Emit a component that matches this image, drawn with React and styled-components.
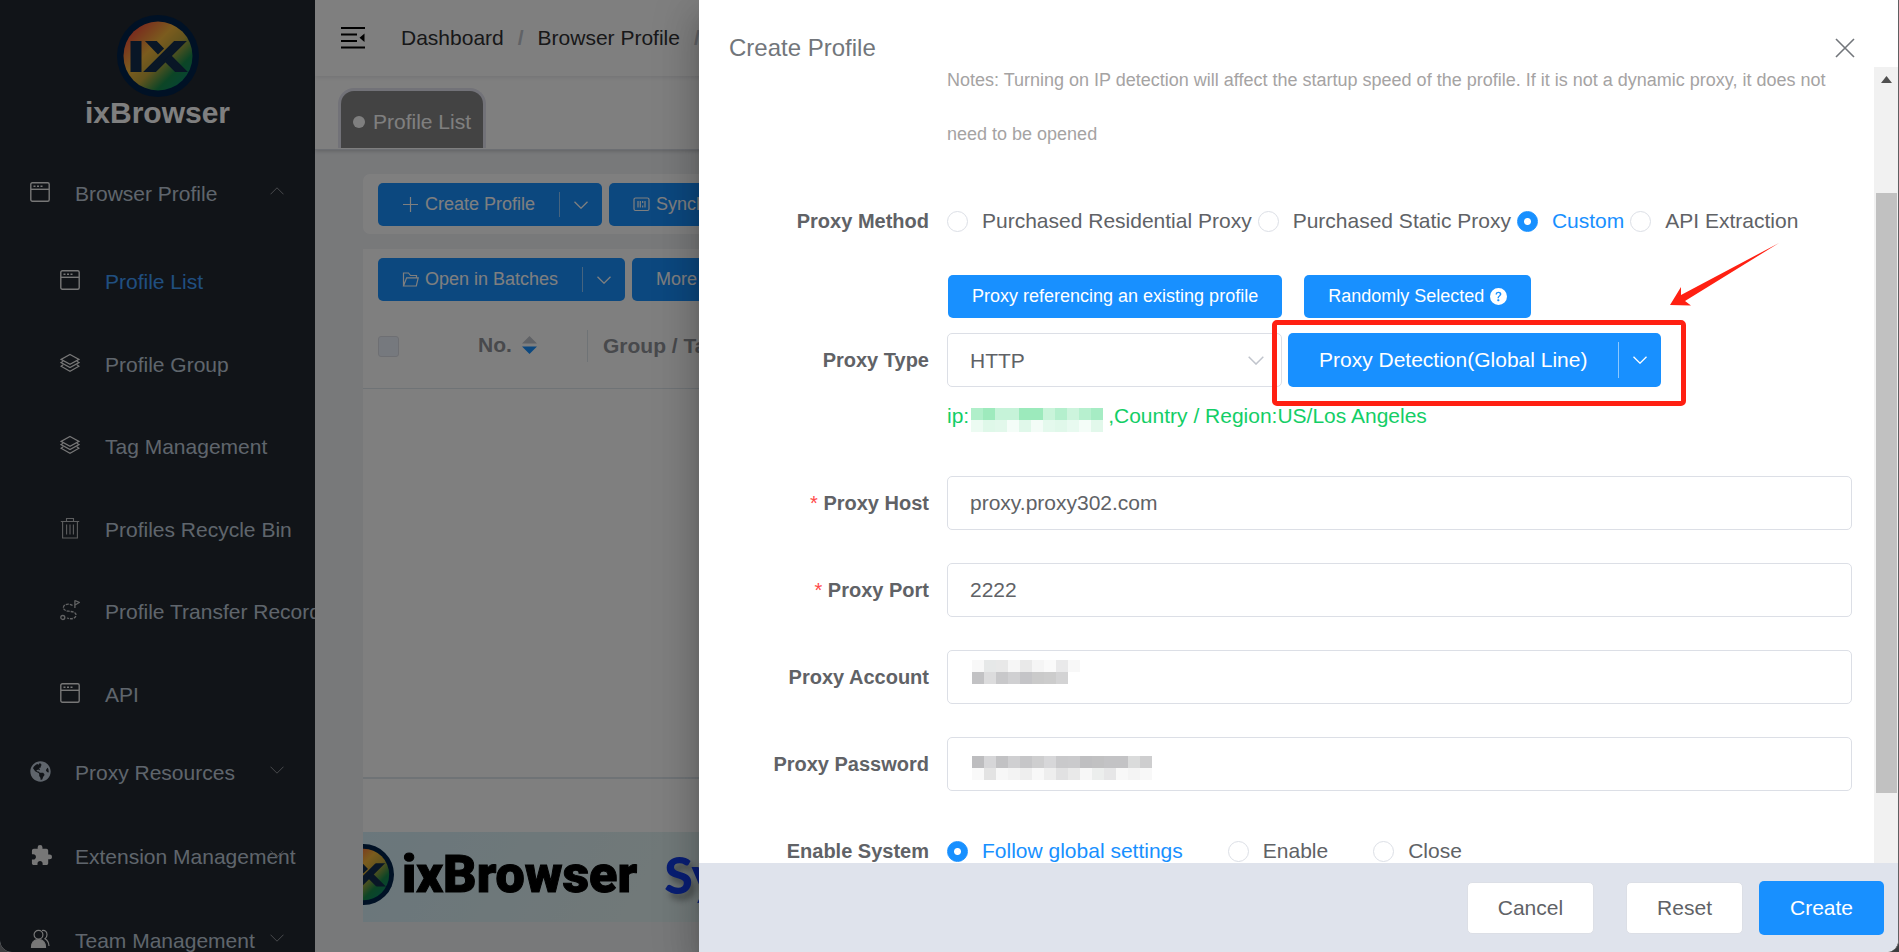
import React, { useState } from 'react';
import styled, { createGlobalStyle, css } from 'styled-components';
import { MdExtension } from 'react-icons/md';
import { FaGlobeAmericas } from 'react-icons/fa';
import { BsQuestionCircleFill } from 'react-icons/bs';

const GlobalStyle = createGlobalStyle`
  * {
    box-sizing: border-box;
  }
  body {
    margin: 0;
    background: #3c3d3f;
    font-family: 'Liberation Sans', Arial, sans-serif;
    font-size: 21px;
    color: #606266;
  }
  button, input, select {
    font-family: inherit;
    font-size: inherit;
    color: inherit;
    margin: 0;
  }
`;

const Page = styled.div`
  position: relative;
  display: flex;
  height: 100vh;
  overflow: hidden;
  border-radius: 0 0 12px 12px;
  background: #f0f2f5;
`;

/* ---------- sidebar ---------- */

const Sidebar = styled.aside`
  flex: none;
  width: 315px;
  overflow: hidden;
  background: #222830;
`;

const Brand = styled.div`
  display: flex;
  flex-direction: column;
  align-items: center;
  padding: 15px 0 23px;
  font-size: 30px;
  font-weight: bold;
  line-height: 32px;
  color: #fff;
`;

const MenuItem = styled.a`
  position: relative;
  display: grid;
  grid-template-columns: 20px 1fr;
  column-gap: 25px;
  align-items: center;
  height: 84px;
  padding-left: 30px;
  white-space: nowrap;
  text-decoration: none;
  color: ${(props) => (props.$active ? '#409eff' : '#bfcbd9')};

  > svg {
    margin-bottom: 4px;
    color: ${(props) => (props.$tint ? '#bfcbd9' : '#eee')};
  }
`;

const SubMenu = styled.div`
  display: grid;
  grid-auto-rows: 1fr;
  height: 495px;

  ${MenuItem} {
    height: auto;
    padding: 10px 0 0 60px;
  }
`;

const MenuCaret = styled.span`
  position: absolute;
  right: 31px;
  display: flex;
  margin-bottom: 6px;
  color: #909399;
`;

/* ---------- main page behind the drawer ---------- */

const Main = styled.main`
  flex: 1;
  min-width: 0;
  display: flex;
  flex-direction: column;
`;

const Navbar = styled.header`
  flex: none;
  display: flex;
  align-items: center;
  height: 76px;
  padding-left: 26px;
  background: #fff;
  box-shadow: 0 1px 5px rgba(0, 21, 41, 0.12);
  z-index: 1;
`;

const IconButton = styled.button`
  display: flex;
  padding: 0;
  border: none;
  background: none;
  color: ${(props) => props.$color || '#000'};
  cursor: pointer;
`;

const Breadcrumb = styled.nav`
  display: flex;
  gap: 14px;
  margin-left: 36px;

  a {
    color: #303133;
    text-decoration: none;
  }
  span {
    font-weight: bold;
    color: #c0c4cc;
  }
`;

const TagsView = styled.div`
  flex: none;
  display: flex;
  align-items: flex-end;
  height: 74px;
  padding: 0 0 1px 23px;
  background: #fff;
  border-bottom: 1px solid #d8dce5;
  box-shadow: 0 1px 4px rgba(0, 0, 0, 0.2);
`;

const Tag = styled.a`
  display: flex;
  align-items: center;
  gap: 8px;
  height: 60px;
  padding: 4px 12px 0;
  border: 3px solid #e4e4f0;
  border-bottom: none;
  border-radius: 16px 16px 0 0;
  background: #868686;
  color: #fff;
  text-decoration: none;

  &::before {
    content: '';
    width: 12px;
    height: 12px;
    border-radius: 50%;
    background: #fff;
  }
`;

const Content = styled.div`
  flex: 1;
  display: flex;
  flex-direction: column;
  padding: 24px 48px 30px;
`;

const Toolbar = styled.div`
  display: flex;
  gap: 7px;
  padding: 9px 15px ${(props) => (props.$tight ? '4px' : '8px')};
  margin-bottom: ${(props) => (props.$tight ? '0' : '15px')};
  background: #fff;
  border-radius: ${(props) => (props.$tight ? '0' : '7px')};
`;

const Button = styled.button`
  display: flex;
  align-items: center;
  gap: 6px;
  height: ${(props) => (props.$large ? '54px' : '43px')};
  padding: 0 ${(props) => (props.$large ? '31px' : '24px')};
  border: none;
  border-radius: 5px;
  background: #1890ff;
  color: #fff;
  font-size: ${(props) => (props.$large ? '21px' : '18px')};
  white-space: nowrap;
  cursor: pointer;

  ${(props) =>
    props.$plain &&
    css`
      height: 52px;
      padding: 0 30px;
      border: 1px solid #dcdfe6;
      background: #fff;
      color: #606266;
    `}
`;

const Split = styled.div`
  position: relative;
  display: flex;

  ${Button}:first-child {
    border-radius: 5px 0 0 5px;
  }
  ${Button}:nth-child(2) {
    position: relative;
    width: 43px;
    padding: 0;
    justify-content: center;
    border-radius: 0 5px 5px 0;
  }
  ${Button}:nth-child(2)::before {
    content: '';
    position: absolute;
    left: 0;
    top: 9px;
    bottom: 9px;
    width: 1px;
    background: rgba(255, 255, 255, 0.5);
  }
`;

const TableCard = styled.div`
  flex: 1;
  background: #fff;
  border-bottom: 2px solid #dfe6ec;
`;

const Table = styled.table`
  width: 100%;
  border-collapse: collapse;
  table-layout: fixed;

  th {
    height: 83px;
    padding: 0;
    border-bottom: 1px solid #dfe6ec;
    color: #909399;
    text-align: left;
  }
`;

const Col = styled.col`
  width: ${(props) => props.$width};
`;

const Checkbox = styled.input`
  appearance: none;
  display: block;
  width: 21px;
  height: 21px;
  margin: 0 0 0 15px;
  border: 1px solid #dcdfe6;
  border-radius: 3px;
  background: #edf2fc;
`;

const SortHead = styled.div`
  display: flex;
  align-items: center;
  justify-content: center;
  gap: 10px;
  height: 32px;
  padding-bottom: 2px;
  border-right: 1px solid #dfe6ec;
`;

const GroupHead = styled.div`
  padding-left: 15px;
`;

const Pagination = styled.div`
  height: 53px;
  background: #fff;
`;

const Banner = styled.div`
  display: flex;
  align-items: center;
  height: 90px;
  padding-bottom: 6px;
  overflow: hidden;
  background: linear-gradient(120deg, #d5eef8 0%, #e2f2f2 20%, #f0f5f8 60%);
  color: #000;
  font-family: Roboto, 'Liberation Sans', sans-serif;
  font-size: 52px;
  font-weight: 900;
  -webkit-text-stroke: 1px #000;

  svg {
    flex: none;
    margin: 0 8px 0 -30px;
  }
`;

const BannerTitle = styled.span`
  margin-left: 27px;
  font-family: Lato, 'Liberation Sans', sans-serif;
  color: #123ce8;
  -webkit-text-stroke: 0;
  text-shadow: 4px 6px 6px rgba(0, 0, 0, 0.35);
`;

const Overlay = styled.div`
  position: absolute;
  inset: 0;
  z-index: 2;
  background: rgba(0, 0, 0, 0.5);
`;

/* ---------- drawer ---------- */

const Drawer = styled.section`
  position: absolute;
  top: 0;
  right: 0;
  bottom: 0;
  left: 699px;
  z-index: 3;
  display: flex;
  flex-direction: column;
  border-right: 1px solid #5f5f61;
  border-radius: 0 0 12px 0;
  background: #fff;
  box-shadow: 0 12px 15px -7px rgba(0, 0, 0, 0.2),
    0 24px 36px 3px rgba(0, 0, 0, 0.14), 0 9px 45px 8px rgba(0, 0, 0, 0.12);
`;

const DrawerHeader = styled.header`
  flex: none;
  display: flex;
  align-items: center;
  justify-content: space-between;
  height: 67px;
  padding: 29px 43px 0 30px;

  h2 {
    margin: 0;
    font-size: 24px;
    font-weight: normal;
    color: #72767b;
  }
`;

const DrawerBody = styled.div`
  flex: 1;
  min-height: 0;
  display: flex;
  overflow: hidden;
`;

const Form = styled.form`
  flex: 1;
  padding-right: 22px;
  margin-top: -14px;
`;

const FormItem = styled.div`
  display: grid;
  grid-template-columns: 230px 1fr;
  column-gap: 18px;
  align-items: center;
  margin-bottom: ${(props) => props.$space || '33px'};
`;

const labelText = css`
  font-size: 20px;
  font-weight: bold;
  text-align: right;
`;

const Label = styled.label`
  ${labelText}

  ${(props) =>
    props.$required &&
    css`
      &::before {
        content: '* ';
        font-weight: normal;
        color: #ff4949;
      }
    `}
`;

const GroupLabel = styled.span`
  ${labelText}
`;

const Note = styled.p`
  grid-column: 2;
  margin: 0;
  font-size: 18px;
  line-height: 54px;
  color: #a5a3a3;
`;

const RadioGroup = styled.div`
  display: flex;
  align-items: center;
  gap: ${(props) => props.$gap};
  height: 54px;
  white-space: nowrap;
`;

const RadioLabel = styled.label`
  display: flex;
  align-items: center;
  gap: ${(props) => props.$gap || '14px'};
  color: ${(props) => (props.$checked ? '#1890ff' : '#606266')};
  cursor: pointer;
`;

const Radio = styled.input`
  appearance: none;
  width: 21px;
  height: 21px;
  border: 1px solid #dcdfe6;
  border-radius: 50%;

  &:checked {
    border-color: #1890ff;
    background: radial-gradient(circle, #fff 3px, #1890ff 4px);
  }
`;

const ButtonRow = styled.div`
  grid-column: 2;
  display: flex;
  gap: 22px;
  padding-left: 1px;
`;

const TypeRow = styled.div`
  display: flex;
  gap: 6px;
`;

const SelectBox = styled.div`
  position: relative;
  width: 335px;

  svg {
    position: absolute;
    top: 23px;
    right: 18px;
    color: #c0c4cc;
    pointer-events: none;
  }
`;

const field = css`
  display: block;
  width: 100%;
  height: 54px;
  padding: 0 22px;
  border: 1px solid #dcdfe6;
  border-radius: 5px;
  background: #fff;
  outline: none;
`;

const Select = styled.select`
  ${field}
  appearance: none;
`;

const Input = styled.input`
  ${field}
`;

const InputBox = styled.div`
  position: relative;

  svg {
    position: absolute;
    left: 25px;
    top: ${(props) => props.$maskTop};
  }
`;

// red frame drawn around the detection button
const Highlight = styled.div`
  position: absolute;
  inset: -13px -25px -19px -16px;
  border: 5px solid #ff2012;
  border-radius: 5px;
  pointer-events: none;
`;

const ArrowMark = styled.svg`
  position: absolute;
  left: calc(100% + 9px);
  top: -91px;
  pointer-events: none;
`;

const IpResult = styled.p`
  grid-column: 2;
  display: flex;
  align-items: center;
  gap: 2px;
  height: 58px;
  margin: 0;
  color: #13ce66;

  svg {
    margin: 7px 3px 0 0;
  }
`;

const Scrollbar = styled.div`
  flex: none;
  width: 24px;
  padding: 9px 1px 70px 2px;
  display: flex;
  flex-direction: column;
  align-items: center;
  gap: 110px;
  background: #f1f1f1;
  color: #505050;
`;

const Thumb = styled.div`
  flex: 1;
  width: 100%;
  background: #c1c1c1;
`;

const DrawerFooter = styled.footer`
  flex: none;
  display: flex;
  align-items: center;
  justify-content: flex-end;
  gap: 16px;
  height: 89px;
  padding-right: 14px;
  border-radius: 0 0 12px 0;
  background: #dfe3ec;

  ${Button}:first-child {
    margin-right: 16px;
  }
`;

/* ---------- icons ---------- */

const Chevron = ({ up, width = 14, stroke = 1.3 }) => (
  <svg width={width} height={width / 2 + 1} viewBox="0 0 14 8" fill="none" stroke="currentColor" strokeWidth={stroke}>
    <path d={up ? 'M.5 7.3L7 .8l6.500 6.500' : 'M.5.7L7 7.200l6.500-6.500'} />
  </svg>
);

const Logo = ({ size, id }) => (
  <svg width={size} height={size} viewBox="0 0 82 82">
    <defs>
      <linearGradient id={`${id}-fill`} x1="0.12" y1="0.12" x2="0.85" y2="0.85">
        <stop offset="0" stopColor="#f4503c" />
        <stop offset="0.38" stopColor="#f6b83c" />
        <stop offset="0.6" stopColor="#c4a83c" />
        <stop offset="0.85" stopColor="#188a4c" />
        <stop offset="1" stopColor="#108a60" />
      </linearGradient>
      <clipPath id={`${id}-clip`}>
        <rect x="12" y="26" width="60" height="31" />
      </clipPath>
    </defs>
    <circle cx="41" cy="41" r="41" fill="#00224a" />
    <circle cx="41" cy="41" r="34.500" fill={`url(#${id}-fill)`} />
    <g clipPath={`url(#${id}-clip)`} stroke="#122c4c">
      <rect x="13.500" y="26" width="11" height="31" fill="#122c4c" stroke="none" />
      <line x1="28" y1="20" x2="44" y2="36.500" strokeWidth="8.500" />
      <line x1="70" y1="19.500" x2="26" y2="63.500" strokeWidth="9" />
      <line x1="50" y1="42.500" x2="71" y2="63.500" strokeWidth="9" />
    </g>
  </svg>
);

const WindowIcon = () => (
  <svg width="20" height="20" viewBox="0 0 20 20" fill="none" stroke="currentColor" strokeWidth="1.400">
    <rect x="0.800" y="0.800" width="18.400" height="18.400" rx="1.500" />
    <path d="M1 7.300h18" />
    <path d="M3.500 4.200h2M7 4.200h2M10.500 4.200h2" />
  </svg>
);

const LayersIcon = () => (
  <svg width="20" height="20" viewBox="0 0 20 20" fill="none" stroke="currentColor" strokeWidth="1.200">
    <path d="M10 1.500L19 6.400 10 11.300 1 6.400z" />
    <path d="M3.200 8.200L1 9.600l9 5 9-5-2.200-1.400M3.200 11.700L1 13.200l9 5 9-5-2.200-1.500" />
  </svg>
);

const TrashIcon = () => (
  <svg width="20" height="22" viewBox="0 0 20 22" fill="none" stroke="currentColor" strokeWidth="1.100" opacity="0.75">
    <path d="M.8 4.500h18.400M6.500 4.300V1.500h7v2.800M2.600 4.500v16.500h14.800V4.500" />
    <path d="M6.600 7.500v10M10 7.500v10M13.400 7.500v10" />
  </svg>
);

const RouteIcon = () => (
  <svg width="20" height="22" viewBox="0 0 20 22" fill="none" stroke="currentColor" strokeWidth="1.300" opacity="0.8">
    <circle cx="2.800" cy="18.500" r="2" />
    <path d="M14.900 9V1.300M15 1.500l4.300 2-4.300 2.500" />
    <path
      strokeDasharray="3 1"
      d="M12.500 6.500C10.500 4.500 4 4.500 3.500 8s3 3.800 6 4.300 7 1 6.500 4.200-5 4-9 2.500"
    />
  </svg>
);

const TeamIcon = () => (
  <svg width="20" height="20" viewBox="0 0 20 20" fill="none" stroke="currentColor" strokeWidth="1.200">
    <path d="M12 1.500c3.500-.5 5 1.500 5 4.200 0 2-1 3.300-2 4.100 2.500 1.400 3.800 4 4 7.200" />
    <circle cx="8.500" cy="5.800" r="4.400" />
    <path d="M1.500 18.500c0-5 2.700-8 7-8s7 3 7 8z" fill="currentColor" />
  </svg>
);

const HamburgerIcon = () => (
  <svg width="24" height="22" viewBox="0 0 24 22" fill="none" stroke="currentColor" strokeWidth="2">
    <path d="M0 1h24M0 7.500h16M0 14h16M0 20.500h24" />
    <path d="M23.500 6.500v8.500l-5-4.200z" fill="currentColor" stroke="none" />
  </svg>
);

const PlusIcon = () => (
  <svg width="17" height="17" viewBox="0 0 17 17" stroke="currentColor" strokeWidth="1.200">
    <path d="M8.500 1v15M1 8.500h15" />
  </svg>
);

const SyncIcon = () => (
  <svg width="17" height="17" viewBox="0 0 17 17" fill="none" stroke="currentColor" strokeWidth="1.200">
    <rect x="1" y="2" width="15" height="12.500" rx="1.500" />
    <path d="M5 5v6.500M12 5v6.500M7.300 5v6.500M9.700 5v2M9.700 9.500v2" />
  </svg>
);

const FolderIcon = () => (
  <svg width="17" height="17" viewBox="0 0 17 17" fill="none" stroke="currentColor" strokeWidth="1.200">
    <path d="M1.500 15V2h5l2 2.500h6v2.300M1.500 15L4.600 6.800h11.600L14.300 15z" />
  </svg>
);

const SortIcon = () => (
  <svg width="15" height="18" viewBox="0 0 15 18">
    <path d="M7.500 0L15 7.500H0z" fill="#c0c4cc" />
    <path d="M7.500 18L0 10.500h15z" fill="#1890ff" />
  </svg>
);

const CloseIcon = () => (
  <svg width="20" height="20" viewBox="0 0 20 20" stroke="currentColor" strokeWidth="1.600">
    <path d="M1 1l18 18M19 1L1 19" />
  </svg>
);

// pixelated block that hides a private value, one colour per 12px cell
const Mosaic = ({ rows }) => (
  <svg width={rows[0].length * 12} height={rows.length * 12} shapeRendering="crispEdges" aria-hidden="true">
    {rows.map((row, y) =>
      row.map((fill, x) => <rect key={`${x}-${y}`} x={x * 12} y={y * 12} width="12" height="12" fill={fill} />)
    )}
  </svg>
);

const ipMask = [
  ['#b0efca', '#9eeabd', '#c6f3d9', '#c6f3d9', '#9ceabc', '#9ceabc', '#c9f4da', '#b4efcd', '#cdf4dd', '#b7f0cf', '#a6ecc4'],
  ['#ecfbf2', '#dff8e9', '#e2f8eb', '#f4fdf8', '#e0f8ea', '#f3fcf7', '#e4f9ed', '#e0f8ea', '#e8faf0', '#f4fdf8', '#e2f8eb'],
];
const accountMask = [
  ['#f8f8f8', '#e6e8e8', '#e8e8e8', '#f6f6f6', '#e9e9e9', '#f5f5f5', '#fafafa', '#e9e9ea', '#f8f8f8'],
  ['#c2c2c4', '#dcdcdd', '#c8c8ca', '#d0d0d2', '#c4c4c7', '#cacaca', '#cccccc', '#d3d3d4', '#ffffff'],
];
const passwordMask = [
  ['#bdbdbf', '#d6d6d8', '#c2c2c4', '#cfcfd1', '#c6c6c8', '#cececf', '#d7d7d9', '#c9c9cb', '#cacacc', '#bfbfc1', '#c1c1c2', '#c3c3c5', '#c3c3c5', '#dadbdb', '#cececf'],
  ['#f9f9f9', '#e3e3e3', '#f7f7f7', '#f3f3f3', '#eeeeee', '#f8f8f8', '#eeeeee', '#e1e1e2', '#e9e9e9', '#f7f7f7', '#eceeed', '#e6e6e7', '#f8f8f8', '#f4f4f4', '#f8f8f8'],
];

const subItems = [
  { title: 'Profile List', icon: <WindowIcon />, active: true },
  { title: 'Profile Group', icon: <LayersIcon /> },
  { title: 'Tag Management', icon: <LayersIcon /> },
  { title: 'Profiles Recycle Bin', icon: <TrashIcon /> },
  { title: 'Profile Transfer Record', icon: <RouteIcon /> },
  { title: 'API', icon: <WindowIcon /> },
];

const mainItems = [
  { title: 'Proxy Resources', icon: <FaGlobeAmericas size={21} />, tint: true },
  { title: 'Extension Management', icon: <MdExtension size={23} /> },
  { title: 'Team Management', icon: <TeamIcon /> },
];

const methods = ['Purchased Residential Proxy', 'Purchased Static Proxy', 'Custom', 'API Extraction'];
const systems = ['Follow global settings', 'Enable', 'Close'];

const Radios = ({ name, options, value, onChange, gap }) => (
  <RadioGroup role="radiogroup" aria-labelledby={`${name}-label`} $gap={gap}>
    {options.map((option) => (
      <RadioLabel key={option} $checked={option === value}>
        <Radio type="radio" name={name} checked={option === value} onChange={() => onChange(option)} />
        {option}
      </RadioLabel>
    ))}
  </RadioGroup>
);

const SideMenu = () => (
  <Sidebar>
    <Brand>
      <Logo size={82} id="side" />
      ixBrowser
    </Brand>
    <MenuItem href="#">
      <WindowIcon />
      Browser Profile
      <MenuCaret>
        <Chevron up stroke={1} />
      </MenuCaret>
    </MenuItem>
    <SubMenu>
      {subItems.map((item) => (
        <MenuItem href="#" key={item.title} $active={item.active}>
          {item.icon}
          {item.title}
        </MenuItem>
      ))}
    </SubMenu>
    {mainItems.map((item) => (
      <MenuItem href="#" key={item.title} $tint={item.tint}>
        {item.icon}
        {item.title}
        <MenuCaret>
          <Chevron stroke={1} />
        </MenuCaret>
      </MenuItem>
    ))}
  </Sidebar>
);

const ProfilePage = () => (
  <Main>
    <Navbar>
      <IconButton type="button" aria-label="Toggle menu">
        <HamburgerIcon />
      </IconButton>
      <Breadcrumb>
        <a href="#">Dashboard</a>
        <span>/</span>
        <a href="#">Browser Profile</a>
        <span>/</span>
      </Breadcrumb>
    </Navbar>
    <TagsView>
      <Tag href="#">Profile List</Tag>
    </TagsView>
    <Content>
      <Toolbar>
        <Split>
          <Button type="button">
            <PlusIcon />
            Create Profile
          </Button>
          <Button type="button" aria-label="More create options">
            <Chevron />
          </Button>
        </Split>
        <Button type="button">
          <SyncIcon />
          Synchronizer
        </Button>
      </Toolbar>
      <Toolbar $tight>
        <Split>
          <Button type="button">
            <FolderIcon />
            Open in Batches
          </Button>
          <Button type="button" aria-label="More open options">
            <Chevron />
          </Button>
        </Split>
        <Button type="button">More</Button>
      </Toolbar>
      <TableCard>
        <Table>
          <colgroup>
            <Col $width="65px" />
            <Col $width="160px" />
            <Col />
          </colgroup>
          <thead>
            <tr>
              <th>
                <Checkbox type="checkbox" aria-label="Select all" />
              </th>
              <th>
                <SortHead>
                  No.
                  <SortIcon />
                </SortHead>
              </th>
              <th>
                <GroupHead>Group / Tag</GroupHead>
              </th>
            </tr>
          </thead>
        </Table>
      </TableCard>
      <Pagination />
      <Banner>
        <Logo size={61} id="banner" />
        ixBrowser
        <BannerTitle>Sy</BannerTitle>
      </Banner>
    </Content>
  </Main>
);

const App = () => {
  const [method, setMethod] = useState('Custom');
  const [system, setSystem] = useState('Follow global settings');

  return (
    <>
      <GlobalStyle />
      <Page>
        <SideMenu />
        <ProfilePage />
        <Overlay />
        <Drawer>
          <DrawerHeader>
            <h2>Create Profile</h2>
            <IconButton type="button" aria-label="Close" $color="#72767b">
              <CloseIcon />
            </IconButton>
          </DrawerHeader>
          <DrawerBody>
            <Form>
              <FormItem>
                <Note>
                  Notes: Turning on IP detection will affect the startup speed of the profile. If it is not a dynamic
                  proxy, it does not need to be opened
                </Note>
              </FormItem>
              <FormItem $space="27px">
                <GroupLabel id="method-label">Proxy Method</GroupLabel>
                <Radios name="method" options={methods} value={method} onChange={setMethod} gap="6px" />
              </FormItem>
              <FormItem $space="15px">
                <ButtonRow>
                  <Button type="button">Proxy referencing an existing profile</Button>
                  <Button type="button">
                    Randomly Selected
                    <BsQuestionCircleFill size={17} />
                  </Button>
                </ButtonRow>
              </FormItem>
              <FormItem $space="0">
                <Label htmlFor="type">Proxy Type</Label>
                <TypeRow>
                  <SelectBox>
                    <Select id="type" defaultValue="HTTP">
                      <option>HTTP</option>
                      <option>HTTPS</option>
                      <option>SOCKS5</option>
                    </Select>
                    <Chevron width={16} />
                  </SelectBox>
                  <Split>
                    <Button type="button" $large>
                      Proxy Detection(Global Line)
                    </Button>
                    <Button type="button" $large aria-label="Choose line">
                      <Chevron />
                    </Button>
                    <Highlight />
                    <ArrowMark width="112" height="64" viewBox="0 0 112 64">
                      <path d="M0 63L11 45v8L109 1 15 59l6 4.500z" fill="#ff2012" />
                    </ArrowMark>
                  </Split>
                </TypeRow>
              </FormItem>
              <FormItem $space="31px">
                <IpResult>
                  ip:
                  <Mosaic rows={ipMask} />
                  <span>,Country / Region:US/Los Angeles</span>
                </IpResult>
              </FormItem>
              <FormItem>
                <Label htmlFor="host" $required>
                  Proxy Host
                </Label>
                <Input id="host" type="text" defaultValue="proxy.proxy302.com" />
              </FormItem>
              <FormItem>
                <Label htmlFor="port" $required>
                  Proxy Port
                </Label>
                <Input id="port" type="text" defaultValue="2222" />
              </FormItem>
              <FormItem>
                <Label htmlFor="account">Proxy Account</Label>
                <InputBox $maskTop="10px">
                  <Input id="account" type="text" />
                  <Mosaic rows={accountMask} />
                </InputBox>
              </FormItem>
              <FormItem>
                <Label htmlFor="password">Proxy Password</Label>
                <InputBox $maskTop="19px">
                  <Input id="password" type="text" />
                  <Mosaic rows={passwordMask} />
                </InputBox>
              </FormItem>
              <FormItem>
                <GroupLabel id="system-label">Enable System</GroupLabel>
                <Radios name="system" options={systems} value={system} onChange={setSystem} gap="45px" />
              </FormItem>
            </Form>
            <Scrollbar>
              <svg width="11" height="7" viewBox="0 0 11 7">
                <path d="M5.500 0L11 7H0z" fill="currentColor" />
              </svg>
              <Thumb />
            </Scrollbar>
          </DrawerBody>
          <DrawerFooter>
            <Button type="button" $large $plain>
              Cancel
            </Button>
            <Button type="button" $large $plain>
              Reset
            </Button>
            <Button type="button" $large>
              Create
            </Button>
          </DrawerFooter>
        </Drawer>
      </Page>
    </>
  );
};

export default App;
